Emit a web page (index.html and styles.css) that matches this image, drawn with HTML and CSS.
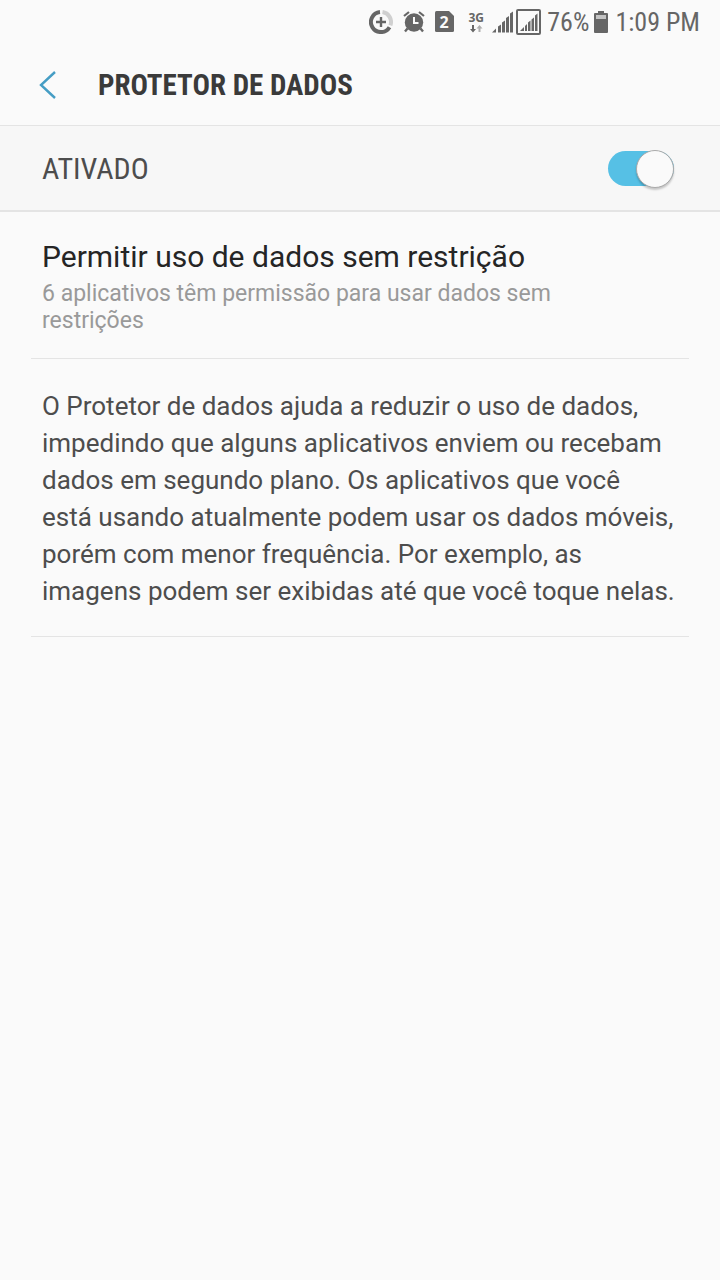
FILE: index.html
```html
<!DOCTYPE html>
<html lang="pt-BR">
<head>
  <meta charset="UTF-8" />
  <meta name="viewport" content="width=device-width, initial-scale=1" />
  <title>Protetor de dados</title>
  <link rel="stylesheet" href="styles.css">
</head>
<body>
  <div class="status-bar">
    <!-- data saver -->
    <svg class="icon-saver" width="24" height="24" viewBox="0 0 24 24" fill="none">
      <path d="M13.5 2.1A10 10 0 0 1 21.4 15.4" stroke="#d0d0d0" stroke-width="4"/>
      <path d="M11 2.1A10 10 0 1 0 20.5 17.2" stroke="#666" stroke-width="4"/>
      <path d="M12 7v10M7 12h10" stroke="#666" stroke-width="2.4"/>
    </svg>
    <!-- alarm -->
    <svg class="icon-alarm" width="22" height="22" viewBox="0 0 22 22" fill="none" stroke="#666">
      <circle cx="11" cy="11.5" r="9.2" fill="#666" stroke="none"/>
      <path d="M1 5l5-4M21 5l-5-4" stroke-width="2.2"/>
      <path d="M4.500 17.500l-2.500 3M17.500 17.500l2.500 3" stroke-width="2.4"/>
      <path d="M11 6v6h4.500" stroke="#fafafa" stroke-width="2"/>
    </svg>
    <!-- second sim -->
    <svg class="icon-sim" width="19" height="22" viewBox="0 0 19 22">
      <path d="M1.500 0H14L19 5V19.500Q19 21 17.500 21H1.500Q0 21 0 19.500V1.500Q0 0 1.500 0Z" fill="#666"/>
      <text class="sim-number" x="9" y="17" text-anchor="middle">2</text>
    </svg>
    <div class="network">
      <span>3G</span>
      <svg width="14" height="8" viewBox="0 0 14 8">
        <path d="M3 0h2v4h2L4 7.500 1 4h2z" fill="#666"/>
        <path d="M9.500 7V3.500h-2L10.500 0l3 3.500h-2V7z" fill="#b0b0b0"/>
      </svg>
    </div>
    <svg class="icon-signal" width="21" height="22" viewBox="0 0 21 22" fill="#666">
      <path d="M0 21.500l4-4v4zM6 15.500l3-2v8H6zM10 11.500l3-2v12h-3zM14 7l3-2v16.500h-3zM18 2.500l3-2v21h-3z"/>
    </svg>
    <svg class="icon-signal-box" width="25" height="26" viewBox="0 0 25 26" fill="#666">
      <rect x="1" y="1" width="23" height="24" rx="1" fill="none" stroke="#666" stroke-width="2"/>
      <path d="M4 22l4-4v4zM9 17l2-2v7H9zM12 13.500l2.500-2V22H12zM15.500 10.500l2.500-2V22h-2.500zM19 6.500l2.500-2V22H19z"/>
    </svg>
    <span class="battery-level">76%</span>
    <svg class="icon-battery" width="14" height="22" viewBox="0 0 14 22">
      <path d="M4 0h6v2h3q1 0 1 1v18q0 1-1 1H1q-1 0-1-1V3q0-1 1-1h3z" fill="#666"/>
      <path d="M2 4h10v4H2z" fill="#c4c4c4"/>
    </svg>
    <span class="clock">1:09 PM</span>
  </div>

  <header class="app-bar">
    <button class="back" type="button" aria-label="Voltar">
      <svg width="18" height="28" viewBox="0 0 18 28" fill="none" stroke="#459dc4" stroke-width="2.4">
        <path d="M16 1L2 14l14 13"/>
      </svg>
    </button>
    <h1>PROTETOR DE DADOS</h1>
  </header>

  <div class="master-switch">
    <label for="data-saver">ATIVADO</label>
    <input class="switch" type="checkbox" id="data-saver" role="switch" checked>
  </div>

  <main class="content">
    <a class="item" href="#">
      <span class="item-title">Permitir uso de dados sem restrição</span>
      <span class="item-summary">6 aplicativos têm permissão para usar dados sem restrições</span>
    </a>
    <p class="description">O Protetor de dados ajuda a reduzir o uso de dados, impedindo que alguns aplicativos enviem ou recebam dados em segundo plano. Os aplicativos que você está usando atualmente podem usar os dados móveis, porém com menor frequência. Por exemplo, as imagens podem ser exibidas até que você toque nelas.</p>
  </main>
</body>
</html>
```
FILE: styles.css
```css
* {
  margin: 0; padding: 0; box-sizing: border-box;
}
body {
  min-height: 100vh;
  background: #fafafa;
  font-family: Roboto, sans-serif;
  color: #4d4d4d;
}
svg {
  display: block;
  flex: none;
}

/* status bar */
.status-bar {
  display: flex;
  justify-content: flex-end;
  align-items: center;
  height: 44px;
  padding-right: 20px;
  color: #666;
  font-family: 'Roboto Condensed', Roboto, sans-serif;
  font-size: 26px;
  line-height: 32px;
}
.icon-alarm, .icon-sim {
  margin-left: 10px;
}
.sim-number {
  fill: #fafafa;
  font-family: 'Open Sans', sans-serif;
  font-size: 16px;
  font-weight: 700;
}
.network {
  display: flex;
  flex-direction: column;
  align-items: center;
  width: 18px;
  margin: 0 7px 0 13px;
  font-family: 'Open Sans', sans-serif;
  font-size: 12px;
  font-weight: 700;
  line-height: 14px;
}
.icon-signal {
  margin-right: 3px;
}
.battery-level {
  margin: 0 5px 0 6px;
}
.clock {
  margin-left: 7px;
}

/* title */
.app-bar {
  display: flex;
  align-items: center;
  height: 82px;
  padding: 0 30px;
  border-bottom: 1px solid #e4e4e4;
}
.back {
  display: flex;
  justify-content: center;
  width: 36px;
  padding: 8px 0;
  margin-right: 32px;
  background: none;
  border: 0;
  cursor: pointer;
}
h1 {
  font-family: 'Roboto Condensed', Roboto, sans-serif;
  font-size: 29px;
  font-weight: 700;
  line-height: 36px;
  color: #3a3a3a;
}

/* main switch */
.master-switch {
  display: flex;
  justify-content: space-between;
  align-items: center;
  height: 86px;
  padding: 1px 46px 0 42px;
  background: #f7f7f7;
  border-bottom: 2px solid #e4e4e4;
}
.master-switch label {
  font-family: 'Roboto Condensed', Roboto, sans-serif;
  font-size: 30px;
  line-height: 36px;
}
.switch {
  appearance: none;
  display: flex;
  align-items: center;
  width: 66px;
  height: 35px;
  border-radius: 18px;
  background: #bdbdbd;
  cursor: pointer;
}
.switch::before {
  content: '';
  box-sizing: border-box;
  width: 38px;
  height: 38px;
  border: 1px solid #aaa;
  border-radius: 50%;
  background: #fafafa;
  box-shadow: 0 2px 2px #0003;
  flex: none;
}
.switch:checked {
  justify-content: flex-end;
  background: #56c0e5;
}

/* settings list */
.content {
  padding: 0 31px;
}
.item {
  display: block;
  padding: 27px 80px 24px 11px;
  border-bottom: 1px solid #e4e4e4;
  text-decoration: none;
}
.item-title {
  display: block;
  margin-bottom: 5px;
  font-size: 30px;
  line-height: 36px;
  color: #252525;
}
.item-summary {
  display: block;
  font-size: 23px;
  line-height: 27px;
  color: #999;
}
.description {
  padding: 29px 14px 26px 11px;
  border-bottom: 1px solid #e4e4e4;
  font-size: 26px;
  line-height: 37px;
}
```
